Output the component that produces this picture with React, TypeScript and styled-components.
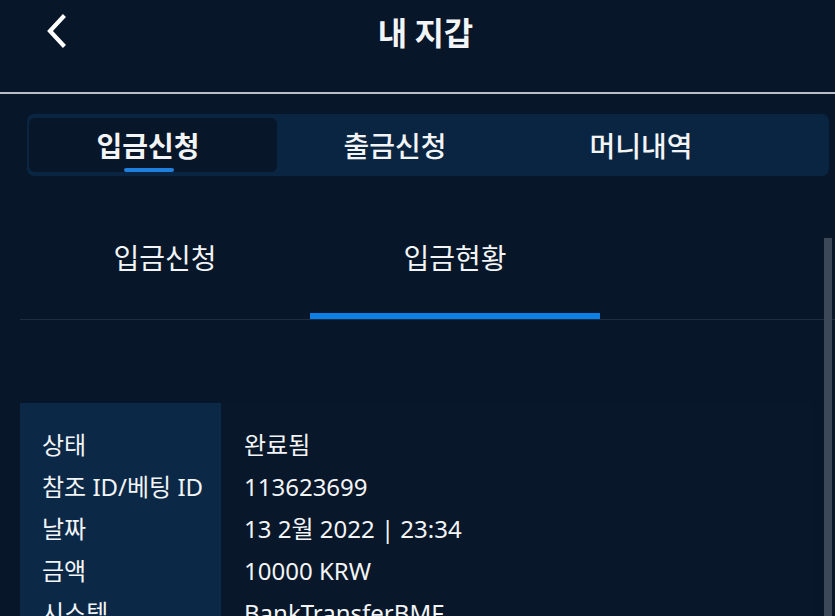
import React from "react";
import styled, { createGlobalStyle } from "styled-components";

const colors = {
  page: "#071628",
  bar: "#0a2541",
  label: "#0b2846",
  blue: "#0c80e6",
  text: "#f2f4f6",
};

const GlobalStyle = createGlobalStyle`
  html, body {
    margin: 0;
    padding: 0;
    background: ${colors.page};
    overflow: hidden;
  }
  body {
    font-family: "Noto Sans", "Noto Sans CJK KR", sans-serif;
    color: ${colors.text};
  }
`;

const Page = styled.div`
  width: 835px;
  height: 616px;
  overflow: hidden;
  background: ${colors.page};
`;

const Header = styled.header`
  height: 92px;
  display: grid;
  grid-template-columns: 1fr auto 1fr;
  align-items: center;
  padding: 0 46px;
  border-bottom: 2px solid #b9bfc6;
`;

const BackButton = styled.button`
  justify-self: start;
  display: flex;
  background: none;
  border: none;
  padding: 0;
  margin-top: -30px;
  cursor: pointer;
`;

const Title = styled.h1`
  margin: -30px 0 0 16px;
  font-family: "Noto Sans CJK KR", sans-serif;
  font-size: 32px;
  font-weight: 700;
  line-height: 1.2;
`;

const TabBar = styled.nav`
  margin: 20px 6px 0 27px;
  height: 62px;
  box-sizing: border-box;
  padding: 4px 2px;
  display: grid;
  grid-template-columns: 248px 246px 246px;
  background: ${colors.bar};
  border-radius: 7px;
`;

const TopTab = styled.div<{ $active?: boolean }>`
  position: relative;
  display: flex;
  align-items: center;
  justify-content: center;
  padding-right: 10px;
  border-radius: 6px;
  background: ${(p) => (p.$active ? colors.page : "transparent")};
  font-family: "Noto Sans CJK KR", sans-serif;
  font-size: 28px;
  font-weight: ${(p) => (p.$active ? 700 : 500)};
`;

const TopUnderline = styled.span`
  position: absolute;
  left: 95px;
  bottom: 0;
  width: 50px;
  height: 4px;
  border-radius: 2px;
  background: #1f7fdc;
`;

const Content = styled.section`
  position: relative;
  display: flow-root;
  height: 440px;
`;

const ScrollThumb = styled.div`
  position: absolute;
  top: 62px;
  right: 3px;
  bottom: 0;
  width: 8px;
  background: #3c4757;
`;

const SubTabs = styled.div`
  margin: 20px 0 0 20px;
  display: flex;
  border-bottom: 1px solid #1e2c3d;
`;

const SubTab = styled.div<{ $active?: boolean }>`
  width: 290px;
  height: 123px;
  box-sizing: border-box;
  padding-top: 41px;
  text-align: center;
  font-family: "Noto Sans CJK KR", sans-serif;
  font-size: 28px;
  line-height: 40px;
  border-bottom: 6px solid ${(p) => (p.$active ? colors.blue : "transparent")};
`;

const InfoTable = styled.dl`
  margin: 83px 23px 0 20px;
  display: grid;
  grid-template-columns: 201px 1fr;
  font-size: 24px;
  line-height: 42px;
`;

const Label = styled.dt`
  background: ${colors.label};
  padding-left: 22px;
  white-space: nowrap;
  &:first-of-type {
    padding-top: 21px;
  }
`;

const Value = styled.dd`
  margin: 0;
  padding-left: 23px;
  background: #081729;
  &:first-of-type {
    padding-top: 21px;
  }
`;

const rows: [string, string][] = [
  ["상태", "완료됨"],
  ["참조 ID/베팅 ID", "113623699"],
  ["날짜", "13 2월 2022 | 23:34"],
  ["금액", "10000 KRW"],
  ["시스템", "BankTransferBMF"],
  ["메모", "-"],
];

function Chevron() {
  return (
    <svg width="20" height="34" viewBox="0 0 20 34">
      <polyline
        points="17,3 4,17 17,31"
        fill="none"
        stroke="#ffffff"
        strokeWidth="4.2"
        strokeLinecap="square"
      />
    </svg>
  );
}

export default function App() {
  return (
    <Page>
      <GlobalStyle />
      <Header>
        <BackButton aria-label="back">
          <Chevron />
        </BackButton>
        <Title>내 지갑</Title>
        <span />
      </Header>

      <TabBar>
        <TopTab $active>
          입금신청
          <TopUnderline />
        </TopTab>
        <TopTab>출금신청</TopTab>
        <TopTab>머니내역</TopTab>
      </TabBar>

      <Content>
        <SubTabs>
          <SubTab>입금신청</SubTab>
          <SubTab $active>입금현황</SubTab>
        </SubTabs>

        <InfoTable>
          {rows.map(([k, v]) => (
            <React.Fragment key={k}>
              <Label>{k}</Label>
              <Value>{v}</Value>
            </React.Fragment>
          ))}
        </InfoTable>
        <ScrollThumb />
      </Content>
    </Page>
  );
}
